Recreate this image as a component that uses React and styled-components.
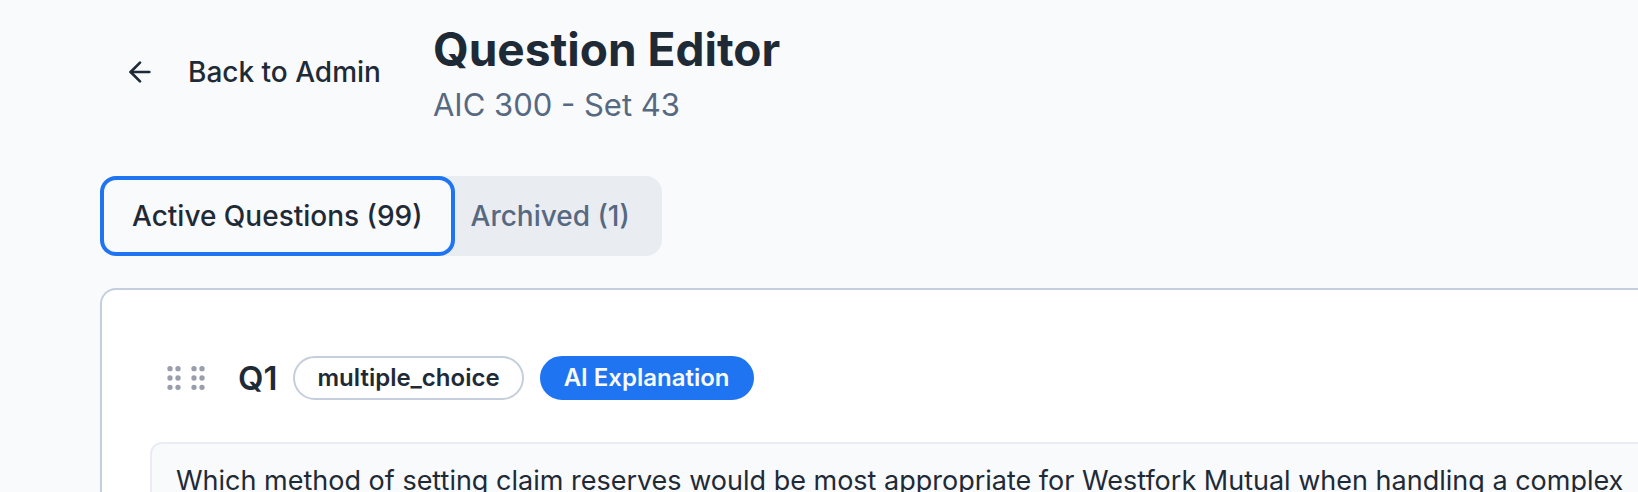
import React, { useState } from "react";
import styled, { createGlobalStyle } from "styled-components";
import { ArrowLeft, GripVertical } from "lucide-react";

const color = {
  page: "#f8fafc",
  card: "#ffffff",
  text: "#1f2a37",
  muted: "#566981",
  tabs: "#e9ecf1",
  border: "#c4cedc",
  softBorder: "#e9ecf1",
  primary: "#1f74f1",
  grip: "#989eab",
};

const GlobalStyle = createGlobalStyle`
  *, *::before, *::after { box-sizing: border-box; }
  body {
    margin: 0;
    background: ${color.page};
    color: ${color.text};
    font-family: Inter, "Liberation Sans", sans-serif;
    font-size: 28px;
    line-height: 40px;
    -webkit-font-smoothing: antialiased;
  }
  button { font: inherit; color: inherit; border: 0; cursor: pointer; }
`;

const Page = styled.main`
  height: 100vh;
  overflow: hidden;
  padding: 16px 0 0 100px;
`;

const Header = styled.header`
  display: flex;
  align-items: center;
  gap: 28px;
  margin-bottom: 48px;
`;

const BackLink = styled.a`
  display: inline-flex;
  align-items: center;
  gap: 32px;
  padding: 12px 24px;
  border-radius: 12px;
  color: ${color.text};
  font-weight: 500;
  text-decoration: none;
  white-space: nowrap;
`;

const Title = styled.h1`
  margin: 0;
  font-size: 46px;
  line-height: 66px;
  font-weight: 700;
`;

const Subtitle = styled.p`
  margin: 0;
  color: ${color.muted};
  font-size: 31px;
  line-height: 46px;
`;

const TabList = styled.div`
  display: inline-flex;
  padding: 8px;
  border-radius: 16px;
  background: ${color.tabs};
`;

const Tab = styled.button`
  padding: 12px 24px;
  border-radius: 8px;
  outline: none;
  font-weight: 500;
  white-space: nowrap;
  background: ${(p) => (p.$active ? color.page : "transparent")};
  color: ${(p) => (p.$active ? color.text : color.muted)};
  box-shadow: ${(p) =>
    p.$active ? `0 0 0 4px ${color.page}, 0 0 0 8px ${color.primary}` : "none"};
`;

const Card = styled.section`
  margin-top: 32px;
  padding: 48px 0 48px 48px;
  border: 2px solid ${color.border};
  border-right: 0;
  border-radius: 16px 0 0 16px;
  background: ${color.card};
`;

const CardHeader = styled.div`
  display: flex;
  align-items: center;
  gap: 16px;
  height: 80px;
  margin-bottom: 24px;
`;

const DragHandle = styled.button`
  display: flex;
  padding: 8px;
  background: transparent;
  color: ${color.grip};
  cursor: grab;

  svg + svg { margin-left: -8px; }
`;

const Number = styled.h2`
  margin: 0;
  font-size: 33px;
  line-height: 48px;
  font-weight: 600;
`;

const Badge = styled.span`
  padding: 4px 22px;
  border: 2px solid ${(p) => (p.$filled ? color.primary : color.border)};
  border-radius: 22px;
  background: ${(p) => (p.$filled ? color.primary : "transparent")};
  color: ${(p) => (p.$filled ? color.page : color.text)};
  font-size: 24px;
  line-height: 32px;
  font-weight: 600;
  white-space: nowrap;
`;

const QuestionText = styled.p`
  margin: 0;
  padding: 16px 0 16px 24px;
  border: 2px solid ${color.softBorder};
  border-right: 0;
  border-radius: 12px 0 0 12px;
  background: ${color.page};
  font-size: 27px;
  line-height: 42px;
  white-space: nowrap;
`;

const tabs = [
  { id: "active", label: "Active Questions (99)" },
  { id: "archived", label: "Archived (1)" },
];

export default function App() {
  const [tab, setTab] = useState("active");

  return (
    <>
      <GlobalStyle />
      <Page>
        <Header>
          <BackLink href="#admin">
            <ArrowLeft size={32} aria-hidden="true" />
            Back to Admin
          </BackLink>
          <div>
            <Title>Question Editor</Title>
            <Subtitle>AIC 300 - Set 43</Subtitle>
          </div>
        </Header>

        <TabList role="tablist">
          {tabs.map((t) => (
            <Tab
              key={t.id}
              type="button"
              role="tab"
              aria-selected={tab === t.id}
              $active={tab === t.id}
              onClick={() => setTab(t.id)}
            >
              {t.label}
            </Tab>
          ))}
        </TabList>

        <Card>
          <CardHeader>
            <DragHandle type="button" aria-label="Reorder question">
              <GripVertical size={32} />
              <GripVertical size={32} />
            </DragHandle>
            <Number>Q1</Number>
            <Badge>multiple_choice</Badge>
            <Badge $filled>AI Explanation</Badge>
          </CardHeader>
          <QuestionText>
            Which method of setting claim reserves would be most appropriate for
            Westfork Mutual when handling a complex
          </QuestionText>
        </Card>
      </Page>
    </>
  );
}
